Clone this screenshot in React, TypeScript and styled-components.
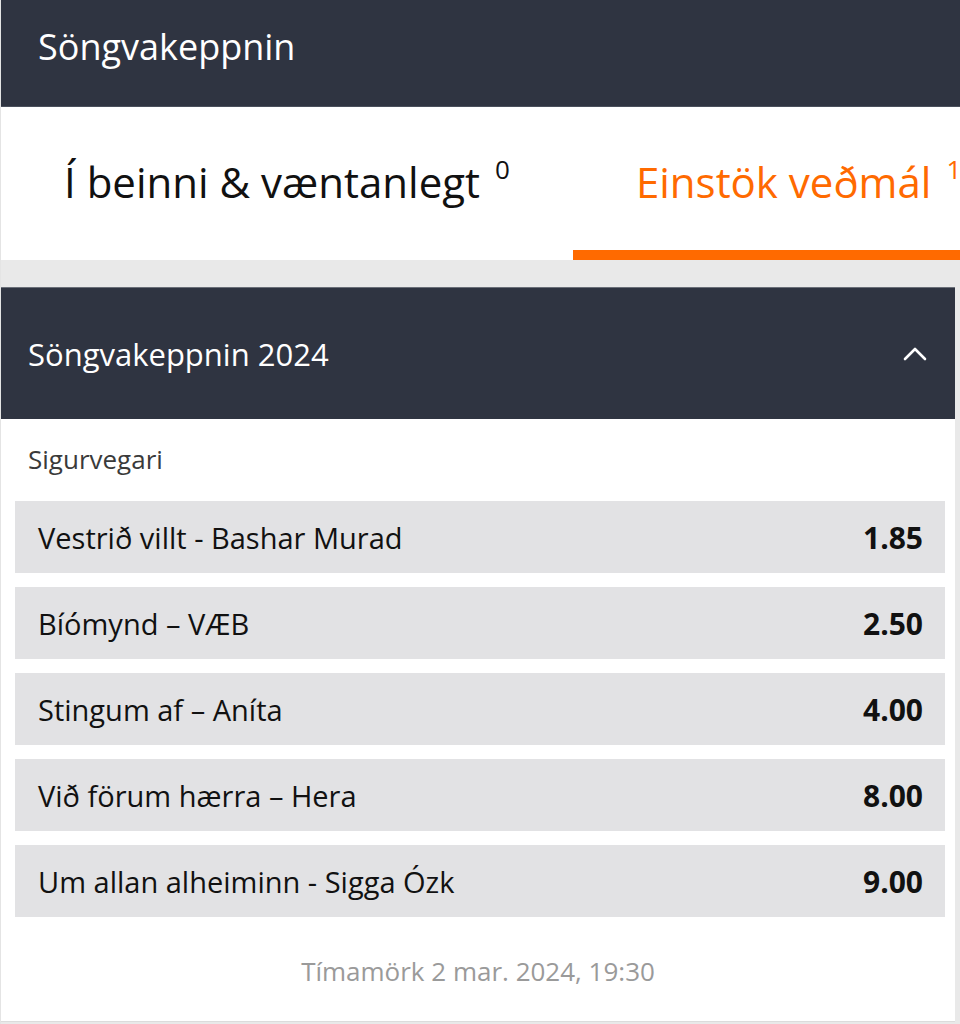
import styled, { createGlobalStyle } from "styled-components";

const GlobalStyle = createGlobalStyle`
  html, body {
    margin: 0;
    padding: 0;
    background: #e9e9e9;
    font-family: "Open Sans", "Liberation Sans", sans-serif;
  }
`;

const Page = styled.div`
  width: 960px;
  min-height: 1024px;
  background: #e9e9e9;
  border-left: 1px solid #e4e4e4;
  box-sizing: border-box;
  overflow: hidden;
`;

const TopBar = styled.div`
  height: 107px;
  background: #2f3441;
  border-bottom: 1px solid #4a505c;
  display: flex;
  align-items: center;
  padding: 0 37px 13px;
  color: #fff;
  font-size: 36px;
  box-sizing: border-box;
`;

const Tabs = styled.div`
  height: 153px;
  background: #fff;
  display: flex;
  overflow: hidden;
`;

const Tab = styled.div<{ $active?: boolean }>`
  flex: ${(p) => (p.$active ? "1 0 0" : "0 0 auto")};
  min-width: 0;
  display: flex;
  align-items: center;
  padding: 6px 63px 0;
  font-size: 42px;
  color: ${(p) => (p.$active ? "#ff6a00" : "#111")};
  border-bottom: 10px solid ${(p) => (p.$active ? "#ff6a00" : "transparent")};
  box-sizing: border-box;
  white-space: nowrap;
`;

const Count = styled.sup`
  font-size: 26px;
  margin-left: 15px;
  position: relative;
  top: -13px;
`;

const Card = styled.div`
  margin-top: 27px;
  margin-right: 5px;
  background: #fff;
  border-bottom: 1px solid #dcdcdc;
`;

const CardHeader = styled.div`
  height: 132px;
  background: #2f3441;
  border-top: 1px solid #6a6f78;
  display: flex;
  align-items: center;
  justify-content: space-between;
  padding: 0 27px;
  color: #fff;
  font-size: 31px;
  box-sizing: border-box;
`;

const MarketTitle = styled.div`
  font-size: 26px;
  line-height: 36px;
  color: #3a3a3a;
  padding: 22px 27px 24px;
`;

const Rows = styled.div`
  display: flex;
  flex-direction: column;
  gap: 14px;
  padding: 0 10px 0 14px;
`;

const Row = styled.div`
  height: 72px;
  background: #e2e2e4;
  display: flex;
  align-items: center;
  justify-content: space-between;
  padding: 0 22px 0 23px;
  font-size: 29px;
  color: #111;
`;

const Odds = styled.span`
  font-weight: 700;
  font-size: 30px;
`;

const Footer = styled.div`
  text-align: center;
  color: #9a9a9a;
  font-size: 26px;
  line-height: 36px;
  padding: 36px 0 32px;
`;

const selections = [
  { name: "Vestrið villt - Bashar Murad", odds: "1.85" },
  { name: "Bíómynd – VÆB", odds: "2.50" },
  { name: "Stingum af – Aníta", odds: "4.00" },
  { name: "Við förum hærra – Hera", odds: "8.00" },
  { name: "Um allan alheiminn - Sigga Ózk", odds: "9.00" },
];

function ChevronUp() {
  return (
    <svg width="26" height="16" viewBox="0 0 26 16" fill="none">
      <path d="M3 13 L13 3 L23 13" stroke="#fff" strokeWidth="2.6" strokeLinecap="round" strokeLinejoin="round" />
    </svg>
  );
}

export default function App() {
  return (
    <Page>
      <GlobalStyle />
      <TopBar>Söngvakeppnin</TopBar>
      <Tabs>
        <Tab>
          Í beinni &amp; væntanlegt<Count>0</Count>
        </Tab>
        <Tab $active>
          Einstök veðmál<Count>1</Count>
        </Tab>
      </Tabs>
      <Card>
        <CardHeader>
          Söngvakeppnin 2024
          <ChevronUp />
        </CardHeader>
        <MarketTitle>Sigurvegari</MarketTitle>
        <Rows>
          {selections.map((s) => (
            <Row key={s.name}>
              {s.name}
              <Odds>{s.odds}</Odds>
            </Row>
          ))}
        </Rows>
        <Footer>Tímamörk 2 mar. 2024, 19:30</Footer>
      </Card>
    </Page>
  );
}
